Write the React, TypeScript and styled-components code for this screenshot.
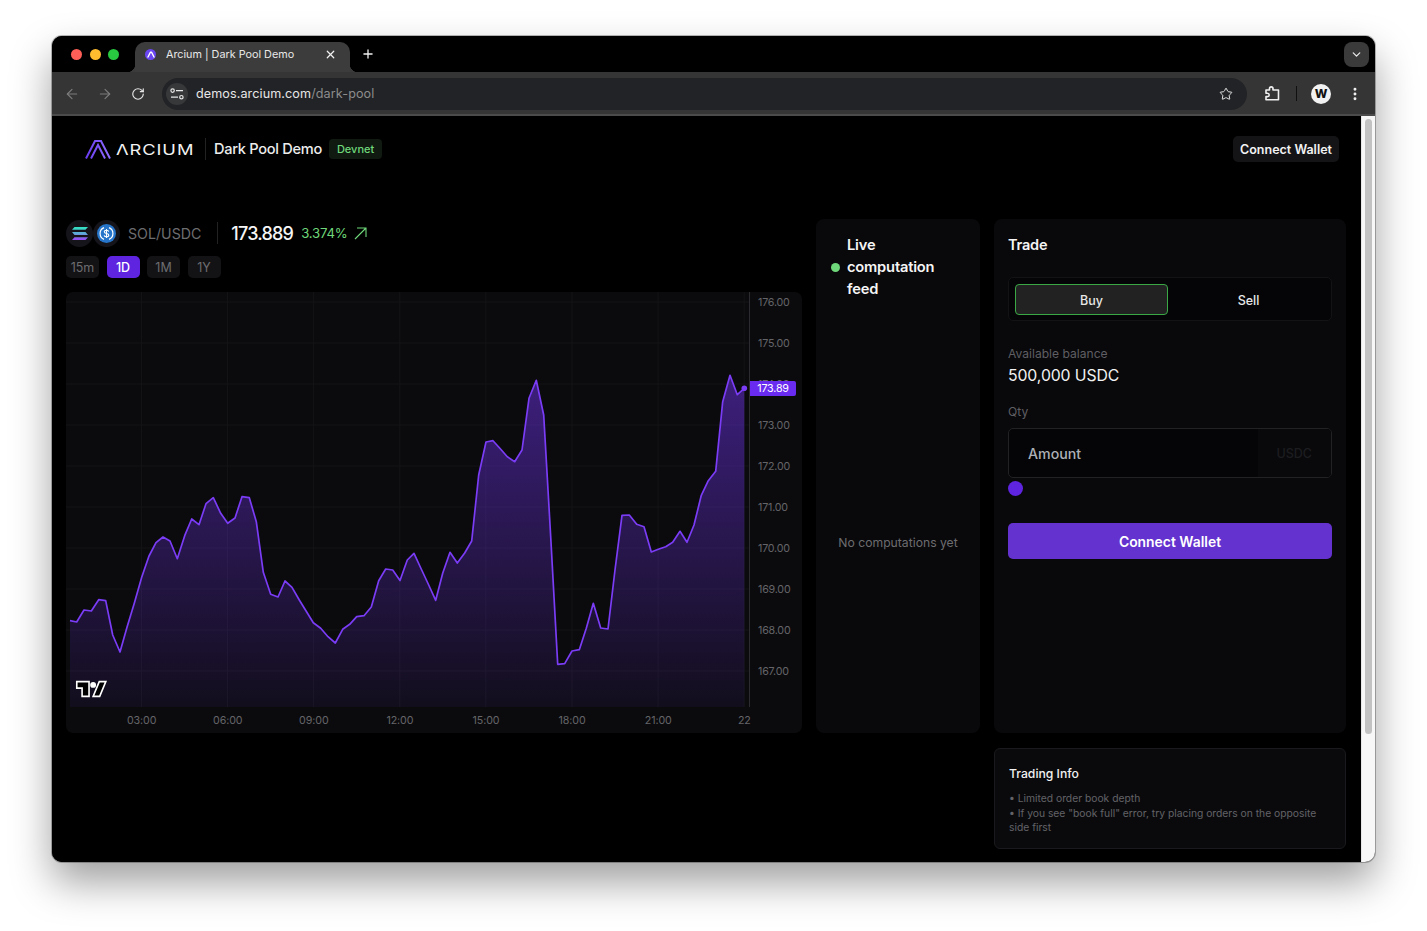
import React from "react";
import styled, { createGlobalStyle } from "styled-components";
import { ArrowLeft, ArrowRight, RotateCw, Star, EllipsisVertical, ChevronDown, X, Plus } from "lucide-react";

const GlobalStyle = createGlobalStyle`
  html, body {
    margin: 0;
    height: 100%;
    background: #ffffff;
    overflow: hidden;
    font-family: "Inter", "Liberation Sans", sans-serif;
  }
  * { box-sizing: border-box; }
`;

// chart points, in the chart's own coordinates (x 66-749, y 292-707)
const points: [number, number][] = [
  [70, 620.7], [76.7, 622], [84, 610], [91.3, 611], [98.7, 599.7], [105.7, 600.7], [112.7, 635], [120, 652],
  [127, 627.3], [134.3, 603.3], [141.7, 577.3], [149, 556], [156, 542.7], [163, 537], [170, 541], [177.3, 558.7],
  [184.7, 535.7], [191.7, 519], [199, 524.7], [206, 503.7], [213.3, 497.7], [220.7, 513.3], [227.7, 523.3], [235, 518],
  [242, 496.7], [249.3, 497.7], [256.3, 521.7], [263.3, 572.3], [270.7, 594.3], [278, 597], [285, 581], [292, 587.3],
  [299.3, 600], [306.7, 612], [313.3, 622.7], [320.7, 628.3], [328, 636.7], [335.3, 643], [342.7, 629.3], [349.7, 624.3],
  [356.7, 616.7], [364, 615.7], [371.3, 607], [378.7, 580.7], [385.7, 569], [392.7, 570], [400, 580.5], [407.3, 560],
  [414, 553.3], [421.7, 570], [428.7, 585], [435.7, 600.3], [442.7, 573.3], [450, 552.3], [457.3, 563], [464.7, 553],
  [471.7, 541], [478.7, 475], [486, 442], [493, 440.7], [500.3, 448.7], [507.3, 456.7], [514.7, 461.7], [522, 450],
  [529, 398.3], [536.3, 380.3], [543.7, 415], [550.7, 536.7], [557.7, 664.3], [564.7, 663.7], [572, 651], [579.3, 649.7],
  [586.3, 628.3], [593.3, 603.3], [600.7, 628], [608, 629], [615, 570], [622, 515.3], [629.3, 515], [636.7, 524.3],
  [644, 526.7], [651.3, 552], [658.3, 549.3], [665.7, 546.7], [672.7, 542.3], [680, 531.3], [687, 542.3], [694, 525],
  [701.3, 495.3], [708.3, 480.7], [715.7, 471.3], [722.7, 401.7], [730, 375.3], [737.3, 394.7], [744.3, 388.3],
];

const prices = ["176.00", "175.00", "174.00", "173.00", "172.00", "171.00", "170.00", "169.00", "168.00", "167.00"];
const times = ["03:00", "06:00", "09:00", "12:00", "15:00", "18:00", "21:00", "22"];
const gridX = [141.6, 227.6, 313.7, 399.8, 485.9, 572, 658.1, 744.2];
const gridY = [302, 343, 384, 425, 466, 507, 548, 589, 630, 671];
const ranges = ["15m", "1D", "1M", "1Y"];

const linePoints = points.map((p) => p.join(",")).join(" ");
const areaPoints = `70,707 ${linePoints} 744.3,707`;

export default function App() {
  return (
    <>
      <GlobalStyle />
      <Stage>
        <BrowserWindow>
          <TabStrip>
            <Lights>
              <Light $color="#ff5f57" />
              <Light $color="#febc2e" />
              <Light $color="#28c840" />
            </Lights>
            <Tab>
              <Favicon>
                <svg width="8" height="7" viewBox="0 0 8 7" fill="none">
                  <path d="M1 6 L3.4 1.2 H4.6 L7 6" stroke="#fff" strokeWidth="1.4" strokeLinecap="round" strokeLinejoin="round" />
                </svg>
              </Favicon>
              <TabTitle>Arcium | Dark Pool Demo</TabTitle>
              <X size={13} color="#f1f1f1" strokeWidth={2.2} />
            </Tab>
            <NewTab>
              <Plus size={14} color="#f1f1f1" strokeWidth={2.2} />
            </NewTab>
            <TabSearch>
              <ChevronDown size={13} color="#e6e6e6" strokeWidth={2.4} />
            </TabSearch>
          </TabStrip>

          <Toolbar>
            <NavIcon><ArrowLeft size={16} color="#7d7d7d" strokeWidth={1.7} /></NavIcon>
            <NavIcon><ArrowRight size={16} color="#7d7d7d" strokeWidth={1.7} /></NavIcon>
            <NavIcon><RotateCw size={14} color="#e6e6e6" strokeWidth={2} /></NavIcon>
            <UrlBar>
              <TuneButton>
                <svg width="14" height="12" viewBox="0 0 14 12" fill="none" stroke="#e6e6e6" strokeWidth="1.2">
                  <circle cx="2.6" cy="2.6" r="1.7" />
                  <path d="M6 2.6 H13" />
                  <circle cx="11.4" cy="9.2" r="1.7" />
                  <path d="M1 9.2 H8" />
                </svg>
              </TuneButton>
              <UrlText>demos.arcium.com<UrlPath>/dark-pool</UrlPath></UrlText>
              <Star size={14} color="#e6e6e6" strokeWidth={1.7} />
            </UrlBar>
            <ExtensionIcon width="17" height="17" viewBox="0 0 17 17" fill="none" stroke="#f0f0f0" strokeWidth="1.6" strokeLinejoin="round">
              <path d="M2 5 H5.5 V3.6 A1.7 1.7 0 0 1 9 3.6 V5 H14.5 V14.8 H2 V11.6 H3.5 A1.7 1.7 0 0 0 3.5 8.2 H2 Z" />
            </ExtensionIcon>
            <ToolbarDivider />
            <Avatar>W</Avatar>
            <EllipsisVertical size={16} color="#f0f0f0" strokeWidth={2.4} />
          </Toolbar>

          <Viewport>
            <Main>
              <Header>
                <Brand>
                  <svg width="26" height="19" viewBox="0 0 26 19" fill="none" strokeWidth="2">
                    <defs>
                      <linearGradient id="mark" x1="0" y1="0" x2="1" y2="0">
                        <stop offset="0" stopColor="#6a3df0" />
                        <stop offset="1" stopColor="#8f6dff" />
                      </linearGradient>
                    </defs>
                    <path d="M1 18.5 L10 1 H16 L25 18.5 M6 18.5 L13 5 L20 18.5" stroke="url(#mark)" />
                  </svg>
                  <Wordmark>ΛRCIUM</Wordmark>
                  <BrandDivider />
                  <AppName>Dark Pool Demo</AppName>
                  <NetworkBadge>Devnet</NetworkBadge>
                </Brand>
                <WalletButton>Connect Wallet</WalletButton>
              </Header>

              <Workspace>
                <ChartColumn>
                  <PairRow>
                    <TokenRing>
                      <svg width="16" height="13" viewBox="0 0 16 13">
                        <defs>
                          <linearGradient id="sol" x1="0" y1="0" x2="0" y2="1">
                            <stop offset="0" stopColor="#2fe6c0" />
                            <stop offset="0.5" stopColor="#5fa8d8" />
                            <stop offset="1" stopColor="#9a45f5" />
                          </linearGradient>
                        </defs>
                        <path d="M2.5 0 H16 L13.5 2.8 H0 Z M0 5.1 H13.5 L16 7.9 H2.5 Z M2.5 10.2 H16 L13.5 13 H0 Z" fill="url(#sol)" />
                      </svg>
                    </TokenRing>
                    <TokenRing>
                      <svg width="19" height="19" viewBox="0 0 19 19" fill="none">
                        <circle cx="9.5" cy="9.5" r="9.5" fill="#2775ca" />
                        <path d="M7 3.6 A6.4 6.4 0 0 0 7 15.4 M12 3.6 A6.4 6.4 0 0 1 12 15.4" stroke="#fff" strokeWidth="1.2" />
                        <path d="M11.7 7.6 C11.5 6.6 10.6 6.2 9.5 6.2 C8.2 6.2 7.3 6.8 7.3 7.8 C7.3 10.2 11.8 8.8 11.8 11.2 C11.8 12.2 10.8 12.8 9.5 12.8 C8.3 12.8 7.4 12.3 7.2 11.3 M9.5 5 V14" stroke="#fff" strokeWidth="1.1" />
                      </svg>
                    </TokenRing>
                    <PairName>SOL/USDC</PairName>
                    <PairDivider />
                    <Price>173.889</Price>
                    <Change>3.374%</Change>
                    <svg width="13" height="13" viewBox="0 0 13 13" fill="none" stroke="#6fd87a" strokeWidth="1.1">
                      <path d="M1 12 L12 1 M3 1 H12 V10" />
                    </svg>
                  </PairRow>

                  <RangeRow>
                    {ranges.map((r) => (
                      <RangeButton key={r} $active={r === "1D"}>{r}</RangeButton>
                    ))}
                  </RangeRow>

                  <ChartPanel>
                    <Plot>
                      <PlotSvg viewBox="66 292 683 415">
                        <defs>
                          <linearGradient id="area" gradientUnits="userSpaceOnUse" x1="0" y1="375" x2="0" y2="707">
                            <stop offset="0" stopColor="#7033ee" stopOpacity="0.5" />
                            <stop offset="1" stopColor="#7033ee" stopOpacity="0.07" />
                          </linearGradient>
                        </defs>
                        {gridX.map((x) => (
                          <line key={x} x1={x} x2={x} y1="292" y2="707" stroke="#141417" />
                        ))}
                        {gridY.map((y) => (
                          <line key={y} x1="66" x2="749" y1={y} y2={y} stroke="#141417" />
                        ))}
                        <polygon points={areaPoints} fill="url(#area)" />
                        <polyline points={linePoints} fill="none" stroke="#7a3cf5" strokeWidth="1.7" strokeLinejoin="round" />
                        <circle cx="744.3" cy="388.3" r="2.8" fill="#7a3cf5" />
                      </PlotSvg>
                      <ChartMark width="33" height="18" viewBox="-1 -1 38 22">
                        <path d="M15 19 H6.5 V9 H0 V1 H15 Z M28 19 H20 L27.5 1 H35.5 Z" fill="#000" stroke="#fff" strokeWidth="2" />
                        <circle cx="20" cy="5" r="3.6" fill="#fff" />
                      </ChartMark>
                    </Plot>
                    <PriceAxis>
                      {prices.map((p) => (
                        <PriceLabel key={p}>{p}</PriceLabel>
                      ))}
                      <LastPrice>173.89</LastPrice>
                    </PriceAxis>
                    <TimeAxis>
                      {times.map((t) => (
                        <TimeLabel key={t}>{t}</TimeLabel>
                      ))}
                    </TimeAxis>
                  </ChartPanel>
                </ChartColumn>

                <FeedPanel>
                  <FeedHeader>
                    <LiveDot />
                    <FeedTitle>Live computation feed</FeedTitle>
                  </FeedHeader>
                  <FeedEmpty>No computations yet</FeedEmpty>
                </FeedPanel>

                <TradePanel>
                  <PanelTitle>Trade</PanelTitle>
                  <SideToggle>
                    <SideButton $active>Buy</SideButton>
                    <SideButton>Sell</SideButton>
                  </SideToggle>
                  <FieldLabel $top={24}>Available balance</FieldLabel>
                  <Balance>500,000 USDC</Balance>
                  <FieldLabel $top={16}>Qty</FieldLabel>
                  <AmountBox>
                    <AmountLabel>Amount</AmountLabel>
                    <AmountUnit>USDC</AmountUnit>
                  </AmountBox>
                  <SliderThumb />
                  <SubmitButton>Connect Wallet</SubmitButton>
                </TradePanel>

                <InfoCard>
                  <InfoTitle>Trading Info</InfoTitle>
                  <InfoText>• Limited order book depth</InfoText>
                  <InfoText>• If you see "book full" error, try placing orders on the opposite side first</InfoText>
                </InfoCard>
              </Workspace>
            </Main>
            <Scrollbar>
              <ScrollThumb />
            </Scrollbar>
          </Viewport>
        </BrowserWindow>
      </Stage>
    </>
  );
}

const Stage = styled.div`
  width: 1427px;
  height: 931px;
  padding: 36px 52px 0;
  background: #ffffff;
`;

const BrowserWindow = styled.div`
  width: 1323px;
  height: 826px;
  display: flex;
  flex-direction: column;
  border-radius: 10px;
  overflow: hidden;
  background: #000;
  box-shadow: 0 20px 40px rgba(0, 0, 0, 0.38), 0 0 0 1px rgba(120, 120, 120, 0.5);
`;

const TabStrip = styled.div`
  height: 36px;
  flex-shrink: 0;
  display: flex;
  align-items: flex-end;
  background: #000;
  padding-right: 6px;
`;

const Lights = styled.div`
  width: 83px;
  height: 36px;
  display: flex;
  align-items: center;
  gap: 7.5px;
  padding: 0 0 0 19px;
`;

const Light = styled.span<{ $color: string }>`
  width: 11px;
  height: 11px;
  border-radius: 50%;
  background: ${(p) => p.$color};
`;

const Tab = styled.div`
  position: relative;
  width: 215px;
  height: 30px;
  display: flex;
  align-items: center;
  padding: 0 13px 6px 10px;
  border-radius: 10px 10px 0 0;
  background: #3c3c3c;

  &::before,
  &::after {
    content: "";
    position: absolute;
    bottom: 0;
    width: 8px;
    height: 8px;
  }
  &::before {
    left: -8px;
    background: radial-gradient(circle at 0 0, transparent 8px, #3a3a3a 8.5px);
  }
  &::after {
    right: -8px;
    background: radial-gradient(circle at 100% 0, transparent 8px, #3a3a3a 8.5px);
  }
`;

const Favicon = styled.span`
  width: 11px;
  height: 11px;
  border-radius: 50%;
  background: #6a45f2;
  display: flex;
  align-items: center;
  justify-content: center;
`;

const TabTitle = styled.span`
  flex: 1;
  margin-left: 10px;
  color: #e8e8e8;
  font-size: 10.8px;
  white-space: nowrap;
`;

const NewTab = styled.span`
  width: 35px;
  height: 36px;
  display: flex;
  align-items: center;
  justify-content: center;
`;

const TabSearch = styled.span`
  width: 25px;
  height: 25px;
  margin: 0 0 5px auto;
  border-radius: 8px;
  background: #3a3a3a;
  display: flex;
  align-items: center;
  justify-content: center;
`;

const Toolbar = styled.div`
  height: 44px;
  flex-shrink: 0;
  display: flex;
  align-items: center;
  padding: 1px 12px 0 4px;
  background: #353535;
  border-bottom: 2px solid #4b4b4b;
`;

const NavIcon = styled.span`
  width: 33px;
  display: flex;
  justify-content: center;
`;

const UrlBar = styled.div`
  width: 1086px;
  height: 32px;
  margin-left: 7px;
  display: flex;
  align-items: center;
  padding: 0 14px 0 4px;
  border-radius: 16px;
  background: #222326;
`;

const TuneButton = styled.span`
  width: 22px;
  height: 22px;
  border-radius: 50%;
  background: #37383a;
  display: flex;
  align-items: center;
  justify-content: center;
`;

const UrlText = styled.span`
  flex: 1;
  margin-left: 8px;
  color: #e6e6e6;
  font-size: 12.6px;
  letter-spacing: 0.1px;
`;

const UrlPath = styled.span`
  color: #8c8c8c;
`;

const ExtensionIcon = styled.svg`
  margin-left: 17px;
`;

const ToolbarDivider = styled.span`
  width: 1px;
  height: 15px;
  margin: 0 14px 0 15px;
  background: #101010;
`;

const Avatar = styled.span`
  width: 20px;
  height: 20px;
  margin-right: 16px;
  border-radius: 50%;
  background: #f2f2f2;
  color: #111;
  font-size: 12px;
  font-weight: 800;
  display: flex;
  align-items: center;
  justify-content: center;
`;

const Viewport = styled.div`
  flex: 1;
  min-height: 0;
  display: flex;
`;

const Main = styled.main`
  width: 1309px;
  flex-shrink: 0;
  background: #000;
`;

const Scrollbar = styled.div`
  flex: 1;
  padding: 3px 3px 0;
  background: #f7f7f7;
  border-left: 1px solid #e6e6e6;
`;

const ScrollThumb = styled.div`
  height: 615px;
  border-radius: 4px;
  background: #c2c2c2;
`;

const Header = styled.header`
  height: 66px;
  margin-bottom: 37px;
  display: flex;
  align-items: center;
  justify-content: space-between;
  padding: 0 22px 0 33px;
`;

const Brand = styled.div`
  display: flex;
  align-items: center;
`;

// the logo's lettering is wider than Inter, so it is stretched
const Wordmark = styled.span`
  width: 80px;
  margin-left: 5px;
  color: #f2f2f2;
  font-size: 15px;
  font-weight: 400;
  letter-spacing: 0.75px;
  white-space: nowrap;
  transform: scaleX(1.22);
  transform-origin: left center;
`;

const BrandDivider = styled.span`
  width: 1px;
  height: 22px;
  margin: 0 8px 0 9px;
  background: #222;
`;

const AppName = styled.span`
  color: #ececec;
  font-size: 14.6px;
  font-weight: 500;
  letter-spacing: -0.3px;
`;

const NetworkBadge = styled.span`
  height: 20px;
  margin-left: 7px;
  padding: 0 8px;
  display: flex;
  align-items: center;
  border-radius: 4px;
  background: #101a11;
  color: #6fd87a;
  font-size: 11px;
  font-weight: 500;
`;

const WalletButton = styled.button`
  height: 26px;
  width: 106px;
  border: 0;
  border-radius: 5px;
  background: #141417;
  color: #f2f2f2;
  font-family: inherit;
  font-size: 12.5px;
  font-weight: 600;
  white-space: nowrap;
  padding: 0;
`;

const Workspace = styled.div`
  display: grid;
  grid-template-columns: 736px 164px 352px;
  grid-template-rows: 514px auto;
  column-gap: 14px;
  row-gap: 15px;
  padding-left: 14px;
`;

const ChartColumn = styled.section`
  display: flex;
  flex-direction: column;
`;

const PairRow = styled.div`
  height: 28px;
  margin-bottom: 2px;
  display: flex;
  align-items: center;
`;

const TokenRing = styled.span`
  width: 27px;
  height: 27px;
  border-radius: 50%;
  background: #14141a;
  display: flex;
  align-items: center;
  justify-content: center;
`;

const PairName = styled.span`
  margin-left: 8px;
  color: #6d6d70;
  font-size: 14.2px;
`;

const PairDivider = styled.span`
  width: 1px;
  height: 22px;
  margin: 0 13px 0 16px;
  background: #222;
`;

const Price = styled.span`
  color: #f5f5f5;
  font-size: 18px;
  font-weight: 500;
  letter-spacing: -0.8px;
`;

const Change = styled.span`
  margin: 0 6px 0 8px;
  color: #6fd87a;
  font-size: 13.2px;
  letter-spacing: -0.2px;
`;

const RangeRow = styled.div`
  margin-top: 7px;
  display: flex;
  gap: 7.5px;
`;

const RangeButton = styled.span<{ $active?: boolean }>`
  width: 33px;
  height: 22px;
  border-radius: 5px;
  display: flex;
  align-items: center;
  justify-content: center;
  background: ${(p) => (p.$active ? "#5e24e0" : "#131316")};
  color: ${(p) => (p.$active ? "#ffffff" : "#6d6d70")};
  font-size: 12.5px;
  font-weight: ${(p) => (p.$active ? 500 : 400)};
`;

const ChartPanel = styled.div`
  margin-top: 14px;
  display: grid;
  grid-template-columns: 684px 52px;
  grid-template-rows: 415px 26px;
  border-radius: 7px;
  overflow: hidden;
  background: #0b0b0d;
`;

const Plot = styled.div`
  position: relative;
  border-right: 1px solid #2c2c30;
`;

const PlotSvg = styled.svg`
  display: block;
  width: 683px;
  height: 415px;
`;

const ChartMark = styled.svg`
  position: absolute;
  left: 9px;
  bottom: 9px;
`;

const PriceAxis = styled.div`
  position: relative;
  display: flex;
  flex-direction: column;
  gap: 21px;
  padding: 1px 0 0 8px;
`;

const PriceLabel = styled.span`
  line-height: 20px;
  color: #656569;
  font-size: 10.7px;
  letter-spacing: -0.2px;
`;

const LastPrice = styled.span`
  position: absolute;
  left: 0;
  top: 89px;
  width: 46px;
  height: 15px;
  display: flex;
  align-items: center;
  justify-content: center;
  border-radius: 0 2px 2px 0;
  background: #6a2bf0;
  color: #ffffff;
  font-size: 10.7px;
  letter-spacing: -0.2px;
`;

const TimeAxis = styled.div`
  grid-column: 1 / 3;
  display: flex;
  align-items: center;
  padding-left: 32.6px;
`;

const TimeLabel = styled.span`
  width: 86.1px;
  flex-shrink: 0;
  text-align: center;
  color: #656569;
  font-size: 10.7px;
  letter-spacing: -0.1px;
`;

const FeedPanel = styled.section`
  display: flex;
  flex-direction: column;
  border-radius: 8px;
  background: #09080b;
`;

const FeedHeader = styled.div`
  display: flex;
  align-items: center;
  gap: 7px;
  padding: 15px 30px 0 15px;
`;

const LiveDot = styled.span`
  width: 9px;
  height: 9px;
  flex-shrink: 0;
  border-radius: 50%;
  background: #6fd87a;
`;

const FeedTitle = styled.h2`
  margin: 0;
  color: #f5f5f5;
  font-size: 14.7px;
  font-weight: 600;
  line-height: 22px;
  letter-spacing: -0.2px;
`;

const FeedEmpty = styled.div`
  flex: 1;
  padding-top: 52px;
  display: flex;
  align-items: center;
  justify-content: center;
  color: #6d6d70;
  font-size: 12.2px;
`;

const TradePanel = styled.section`
  padding: 16px 14px 0;
  border-radius: 8px;
  background: #09080b;
`;

const PanelTitle = styled.h2`
  margin: 0;
  color: #f5f5f5;
  font-size: 14.5px;
  font-weight: 600;
  line-height: 20px;
  letter-spacing: -0.2px;
`;

const SideToggle = styled.div`
  height: 44px;
  margin-top: 22px;
  padding: 6px 2px 5px 6px;
  display: grid;
  grid-template-columns: 153px 1fr;
  border: 1px solid #131316;
  border-radius: 5px;
  background: #050507;
`;

const SideButton = styled.span<{ $active?: boolean }>`
  display: flex;
  align-items: center;
  justify-content: center;
  padding-top: 1px;
  border-radius: 4px;
  border: 1px solid ${(p) => (p.$active ? "#3aa845" : "transparent")};
  background: ${(p) => (p.$active ? "#222222" : "transparent")};
  color: #e8e8e8;
  font-size: 12.5px;
  font-weight: 500;
`;

const FieldLabel = styled.div<{ $top: number }>`
  margin-top: ${(p) => p.$top}px;
  color: #5f5f63;
  font-size: 12.1px;
  line-height: 17px;
`;

const Balance = styled.div`
  margin-top: 3px;
  color: #f2f2f2;
  font-size: 15.8px;
  line-height: 22px;
  letter-spacing: -0.1px;
`;

const AmountBox = styled.div`
  height: 50px;
  margin-top: 8px;
  display: flex;
  align-items: stretch;
  border: 1px solid #222225;
  border-radius: 5px;
  background: #050507;
  overflow: hidden;
`;

const AmountLabel = styled.span`
  flex: 1;
  padding-left: 19px;
  display: flex;
  align-items: center;
  color: #adb0b6;
  font-size: 14.2px;
  font-weight: 500;
`;

const AmountUnit = styled.span`
  width: 73px;
  padding-right: 19px;
  display: flex;
  align-items: center;
  justify-content: flex-end;
  background: #09090b;
  color: #1d1d20;
  font-size: 12.5px;
  font-weight: 500;
`;

const SliderThumb = styled.div`
  width: 15px;
  height: 15px;
  margin-top: 3px;
  border-radius: 50%;
  background: #5e24e0;
`;

const SubmitButton = styled.button`
  width: 100%;
  height: 36px;
  margin-top: 27px;
  padding: 1px 0 0;
  border: 0;
  border-radius: 5px;
  background: #6432ce;
  color: #ffffff;
  font-family: inherit;
  font-size: 13.9px;
  font-weight: 600;
`;

const InfoCard = styled.section`
  grid-column: 3;
  height: 101px;
  padding: 16px 14px 0;
  border: 1px solid #1a1a1e;
  border-radius: 6px;
  background: #0a0a0d;
`;

const InfoTitle = styled.h3`
  margin: 0 0 8px;
  color: #f2f2f2;
  font-size: 12.2px;
  font-weight: 500;
  line-height: 18px;
`;

const InfoText = styled.p`
  margin: 0;
  color: #636367;
  font-size: 10.3px;
  line-height: 14.7px;
`;
